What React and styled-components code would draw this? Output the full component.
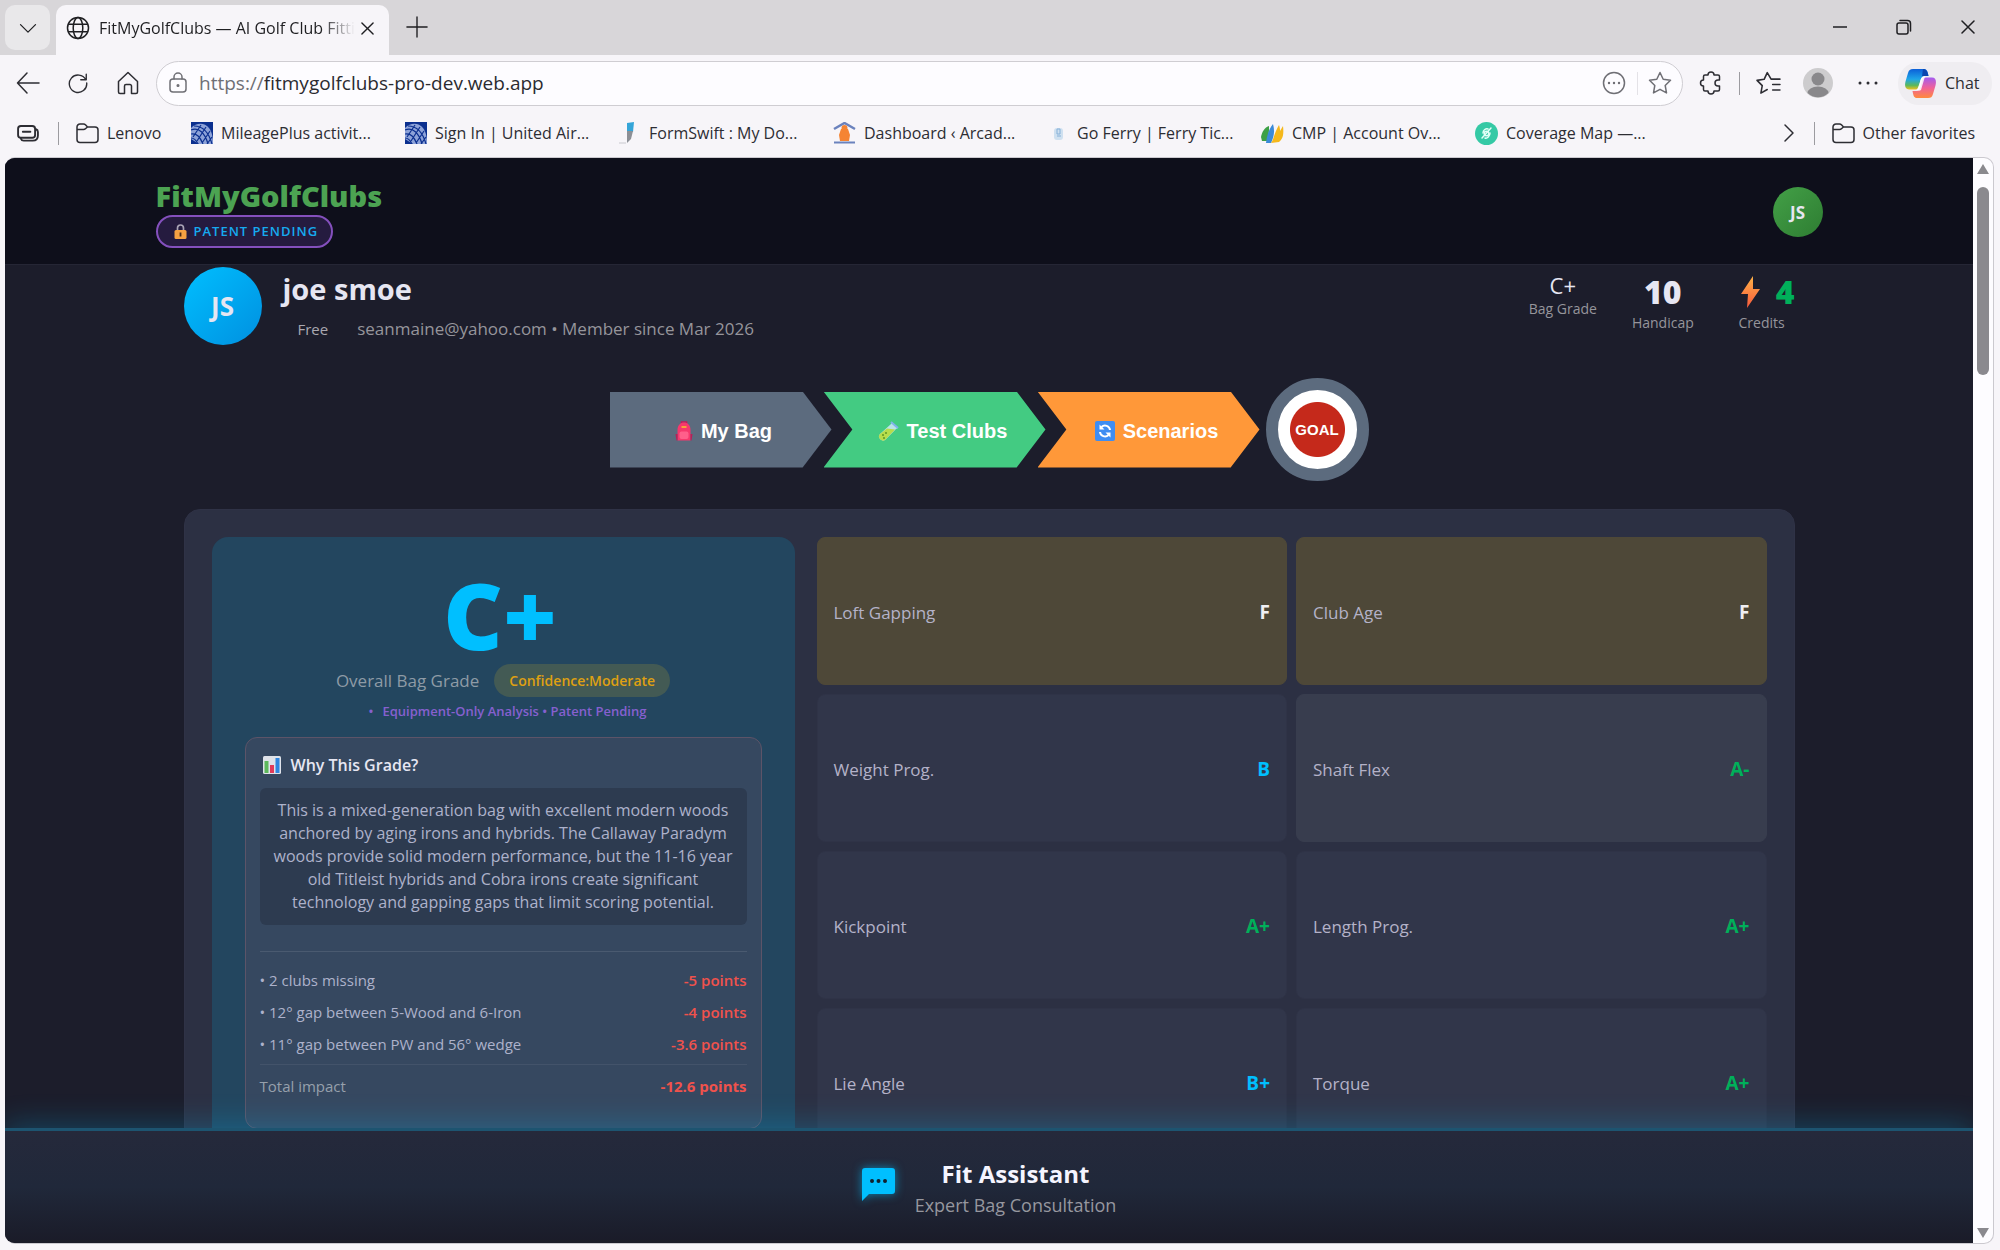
import React from "react";
import styled, {createGlobalStyle, css} from "styled-components";

const GlobalStyle = createGlobalStyle`
    * {
        box-sizing: border-box;
    }
    body {
        margin: 0;
        font-family: "Open Sans", "Noto Sans", sans-serif;
        color: #e6e6f2;
    }
    button {
        font: inherit;
        color: inherit;
        border: none;
        padding: 0;
        background: none;
        cursor: pointer;
    }
    a {
        color: inherit;
        text-decoration: none;
    }
    svg {
        display: block;
        flex: none;
    }
    h1, h2, h3, p, ul {
        margin: 0;
        padding: 0;
    }
`

/* ---------- browser window ---------- */

const StyledWindow = styled.div`
    display: flex;
    flex-direction: column;
    height: 100vh;
    overflow: hidden;
    background: #f7f5f9;
`
const StyledTabStrip = styled.div`
    display: flex;
    flex: none;
    height: 55px;
    padding-left: 5px;
    padding-top: 5px;
    background: #d8d6d9;
    color: #1f1f22;
`
const StyledTabMenu = styled.button`
    display: grid;
    place-items: center;
    width: 45px;
    height: 45px;
    margin-right: 6px;
    border-radius: 10px;
    background: #e9e8ea;
`
const StyledTab = styled.div`
    display: flex;
    align-items: center;
    gap: 9px;
    width: 333px;
    height: 50px;
    padding: 0 15px 4px 10px;
    border-radius: 10px 10px 0 0;
    background: #f7f5f9;
    font-size: 16px;
`
const StyledTabTitle = styled.span`
    flex: 1;
    overflow: hidden;
    white-space: nowrap;
    mask-image: linear-gradient(90deg, #000 222px, transparent 256px);
`
const StyledPlain = styled.button`
    display: grid;
    place-items: center;
    width: ${props => props.$w || 50}px;
    height: 44px;
`
const StyledTabClose = styled.button`
    margin-left: -4px;
`
const StyledWindowButtons = styled.div`
    display: flex;
    margin-left: auto;
`
const StyledToolbar = styled.div`
    display: flex;
    flex: none;
    align-items: center;
    height: 56px;
    padding: 0 8px 0 3px;
    color: #2d2d33;
`
const StyledAddress = styled.div`
    display: flex;
    flex: 1;
    align-items: center;
    height: 45px;
    margin: 0 3px;
    padding: 0 3px 0 12px;
    border: 1px solid #cfcdd2;
    border-radius: 23px;
    background: #fdfcff;
    font-size: 19px;
    color: #6f6f75;
`
const StyledScheme = styled.label`
    margin-left: 12px;
`
const StyledUrl = styled.input`
    flex: 1;
    border: none;
    padding: 0;
    outline: none;
    background: none;
    font: inherit;
    color: #2b2b30;
`
const StyledLine = styled.span`
    width: 1px;
    height: 23px;
    margin: 0 3px;
    background: ${props => props.$light ? "#e4e2e7" : "#9c9ba0"};
`
const StyledChat = styled.button`
    display: flex;
    align-items: center;
    gap: 9px;
    width: 94px;
    height: 43px;
    margin-left: 5px;
    padding-left: 7px;
    border-radius: 21px;
    background: #efedf1;
    font-size: 16px;
`
const StyledBookmarks = styled.nav`
    display: flex;
    flex: none;
    align-items: center;
    height: 46px;
    padding: 0 25px 2px 17px;
    font-size: 16px;
    color: #2d2d33;

    ${StyledLine} {
        margin: 0 17px 0 19px;
    }
`
const StyledBookmark = styled.a`
    display: flex;
    align-items: center;
    gap: 8px;
    width: ${props => props.$w ? props.$w + "px" : "auto"};
    white-space: nowrap;
`
const StyledMore = styled.button`
    margin-left: auto;
`
const StyledView = styled.div`
    display: flex;
    flex: 1;
    min-height: 0;
    margin: 0 6px 6px 5px;
    border: 1px solid #cbc9cf;
    border-left: none;
    border-radius: 10px;
    overflow: hidden;
    background: #fdfcff;
`
const StyledScroll = styled.div`
    display: flex;
    flex-direction: column;
    align-items: center;
    flex: none;
    width: 20px;
    padding: 6px 0 5px;
`
const StyledThumb = styled.div`
    width: 12px;
    height: 188px;
    margin: 13px 0 auto;
    border-radius: 6px;
    background: #8a898e;
`

/* ---------- page ---------- */

const StyledPage = styled.div`
    display: flex;
    flex: 1;
    flex-direction: column;
    min-width: 0;
    overflow: hidden;
    background: #1c1d2b;
`
const StyledHeader = styled.header`
    flex: none;
    border-bottom: 1px solid #252635;
    background: #0e0f1b;
`
const StyledHeaderInner = styled.div`
    display: flex;
    align-items: center;
    justify-content: space-between;
    max-width: 1667px;
    height: 106px;
    margin: 0 auto;
    padding-top: 2px;
`
const StyledLogo = styled.h1`
    font-size: 29px;
    font-weight: 800;
    line-height: 38px;
    color: #4ca352;
`
const StyledPatent = styled.div`
    display: flex;
    align-items: center;
    gap: 7px;
    width: max-content;
    height: 33px;
    padding: 0 13px 0 16px;
    border: 2px solid #8450bd;
    border-radius: 17px;
    background: #251b3f;
    font-size: 13px;
    font-weight: 600;
    letter-spacing: 1px;
    color: #16aaf0;
`
const StyledAvatar = styled.div`
    display: grid;
    flex: none;
    place-items: center;
    width: ${props => props.$size}px;
    height: ${props => props.$size}px;
    border-radius: 50%;
    background: ${props => props.$bg};
    font-size: ${props => props.$font}px;
    font-weight: 700;
`
const StyledMain = styled.main`
    flex: 1;
    min-height: 0;
    overflow: hidden;
`
const StyledContent = styled.div`
    max-width: 1611px;
    margin: 0 auto;
    padding-top: 2px;
`
const StyledProfile = styled.section`
    display: flex;
    align-items: center;
    gap: 21px;
    height: 78px;
`
const StyledName = styled.h2`
    font-size: 29px;
    line-height: 36px;
    margin-bottom: 10px;
`
const StyledMeta = styled.div`
    display: flex;
    align-items: baseline;
    gap: 14px;
    font-size: 17px;
    line-height: 24px;
    color: #96959b;
`
const StyledPlan = styled.span`
    padding: 0 15px;
    font-size: 15px;
    color: #a9a8b0;
`
const StyledStats = styled.div`
    display: flex;
    align-self: flex-start;
    gap: 35px;
    margin: 4px 0 0 auto;
`
const StyledStat = styled.div`
    display: flex;
    flex-direction: column;
    align-items: center;
    font-size: 14px;
    line-height: 20px;
    color: #96959b;
`
const StyledStatValue = styled.div`
    display: flex;
    align-items: center;
    height: ${props => props.$big ? 42 : 28}px;
    font-size: ${props => props.$big ? 32 : 22}px;
    font-weight: ${props => props.$big ? 800 : 400};
    color: ${props => props.$color || "#e6e6f2"};
`
const StyledSteps = styled.nav`
    display: flex;
    align-items: center;
    justify-content: center;
    margin: 33px 0 28px;
    font-family: "Liberation Sans", Arial, sans-serif;
    font-weight: 700;
    color: #fff;
`
const StyledStep = styled.button`
    display: flex;
    align-items: center;
    justify-content: center;
    gap: 8px;
    width: 222px;
    height: 76px;
    padding: 3px 0 0 6px;
    background: ${props => props.$color};
    font-size: 20px;
    clip-path: polygon(0 0, 87% 0, 100% 50%, 87% 100%, 0 100%);

    & + & {
        margin-left: -8px;
        padding-left: 16px;
        clip-path: polygon(0 0, 87% 0, 100% 50%, 87% 100%, 0 100%, 13% 50%);
    }
`
const StyledGoal = styled.button`
    width: 103px;
    height: 103px;
    margin-left: 6px;
    border: 12px solid #5c6b7e;
    border-radius: 50%;
    background: radial-gradient(circle, #c5291b 27px, #fff 28px);
    font-size: 15px;
`
const StyledPanel = styled.section`
    display: grid;
    grid-template-columns: 583fr 950fr;
    gap: 22px;
    padding: 27px;
    border: 1px solid #2f3246;
    border-radius: 16px;
    background: #2c3043;
`
const StyledGrade = styled.div`
    padding: 32px 33px;
    border-radius: 16px;
    background: #23465f;
    text-align: center;
`
const StyledLetter = styled.div`
    padding-right: 6px;
    font-size: 92px;
    font-weight: 800;
    line-height: 92px;
    color: #00bfff;
`
const StyledOverall = styled.div`
    display: flex;
    align-items: center;
    justify-content: center;
    gap: 15px;
    margin-top: 3px;
    font-size: 17px;
    color: #8e9ba6;
`
const StyledConfidence = styled.span`
    padding: 0 15px;
    border-radius: 17px;
    background: #435a54;
    font-size: 14px;
    font-weight: 600;
    line-height: 33px;
    color: #dfa012;
`
const StyledEquipment = styled.p`
    padding-left: 9px;
    font-size: 13px;
    font-weight: 600;
    line-height: 28px;
    margin-bottom: 12px;
    color: #8660cf;

    span {
        margin-right: 9px;
    }
`
const StyledWhy = styled.div`
    height: 392px;
    padding: 14px;
    border: 1px solid #5c5468;
    border-radius: 12px;
    background: #364860;
    font-size: 15px;
    text-align: left;
`
const StyledWhyTitle = styled.h3`
    display: flex;
    align-items: center;
    gap: 10px;
    margin-bottom: 10px;
    padding-left: 3px;
    font-size: 16px;
    font-weight: 600;
    line-height: 26px;
`
const StyledSummary = styled.p`
    padding: 11px 12px;
    border-radius: 6px;
    background: #2d3b50;
    font-size: 16px;
    line-height: 23px;
    text-align: center;
    color: #adb2cb;
`
const StyledDeductions = styled.ul`
    margin-top: 26px;
    padding: 12px 0 0;
    border-top: 1px solid #4a5a70;
    list-style: none;
    color: #adb2cb;
`
const rowBetween = css`
    display: flex;
    align-items: center;
    justify-content: space-between;
`
const StyledDeduction = styled.li`
    ${rowBetween}
    height: 32px;
`
const StyledTotal = styled.div`
    ${rowBetween}
    height: 42px;
    margin-top: 4px;
    border-top: 1px solid #43536a;
    color: #96a0ac;
`
const StyledPoints = styled.span`
    font-weight: ${props => props.$total ? 700 : 600};
    color: #f0524c;
`
const StyledTiles = styled.div`
    display: grid;
    grid-template-columns: 1fr 1fr;
    grid-auto-rows: 148px;
    gap: 9px;
`
const tileColors = {
    warn: "#4e4838",
    hover: "#383d4e",
    plain: "#31364a",
}
const StyledTile = styled.div`
    ${rowBetween}
    padding: 2px 16px 0;
    border: 1px solid ${props => props.$kind === "plain" ? "#2f3347" : tileColors[props.$kind]};
    border-radius: 8px;
    background: ${props => tileColors[props.$kind]};
    font-size: 17px;
    color: #b4b2c8;
`
const StyledMark = styled.span`
    font-size: 19px;
    font-weight: 700;
    color: ${props => props.$color};
`
const StyledAssistant = styled.button`
    position: relative;
    display: flex;
    flex: none;
    align-items: center;
    justify-content: center;
    gap: 20px;
    height: 115px;
    padding-top: 2px;
    border-top: 3px solid #1d5470;
    background: linear-gradient(#25293b, #20283a 50%, #1a1b28);
    box-shadow: 0 -4px 28px rgba(0, 191, 255, 0.24);

    svg {
        margin-bottom: 8px;
        filter: drop-shadow(0 0 5px rgba(0, 191, 255, 0.6));
    }
`
const StyledAssistantTitle = styled.div`
    font-size: 24px;
    font-weight: 700;
    line-height: 34px;
    color: #f5f5ff;
`
const StyledAssistantSub = styled.div`
    font-size: 18px;
    line-height: 28px;
    color: #96979f;
`

/* ---------- icons ---------- */

const Icon = ({w = 24, h, box = "0 0 24 24", sw = 1.5, children}) => (
    <svg width={w} height={h || w} viewBox={box} fill="none" stroke="currentColor" strokeWidth={sw}
         strokeLinecap="round" strokeLinejoin="round" aria-hidden="true">{children}</svg>
)
const ChevronDown = () => <Icon w={20}><path d="M3 8l9 9 9-9"/></Icon>
const Globe = () => (
    <Icon w={24}>
        <circle cx="12" cy="12" r="10.5"/>
        <ellipse cx="12" cy="12" rx="4.8" ry="10.5"/>
        <path d="M2.5 8.3h19M2.5 15.7h19"/>
    </Icon>
)
const Close = ({w = 14}) => <Icon w={w} box="0 0 14 14"><path d="M1 1l12 12M13 1L1 13"/></Icon>
const Plus = () => <Icon w={22}><path d="M12 1v22M1 12h22"/></Icon>
const Minus = () => <Icon w={14} box="0 0 14 14"><path d="M0 7h14"/></Icon>
const Restore = () => (
    <Icon w={16} box="0 0 16 16">
        <rect x="1" y="4" width="11" height="11" rx="2"/>
        <path d="M4 1.5h7.5a3 3 0 0 1 3 3V12"/>
    </Icon>
)
const Back = () => <Icon w={24}><path d="M23 12H1.500M11 2L1.500 12l9.500 10"/></Icon>
const Reload = () => <Icon w={22}><path d="M20.500 8.500A9.500 9.500 0 1 0 21.500 12M21 2.500v6h-6"/></Icon>
const Home = () => <Icon w={24}><path d="M2.500 10.500L12 1.500l9.500 9V21a1.500 1.500 0 0 1-1.500 1.500h-4.500V15a1.500 1.500 0 0 0-1.500-1.500h-4A1.500 1.500 0 0 0 8.500 15v7.500H4A1.500 1.500 0 0 1 2.500 21z"/></Icon>
const UrlLock = () => (
    <Icon w={18} h={22} box="0 0 18 22">
        <rect x="1" y="7" width="16" height="13" rx="3"/>
        <path d="M5 7V5a4 4 0 0 1 8 0v2"/>
        <circle cx="9" cy="13.500" r="0.800" fill="currentColor"/>
    </Icon>
)
const DotsCircle = () => (
    <Icon w={24}>
        <circle cx="12" cy="12" r="10.500"/>
        <path d="M7 12h.01M12 12h.01M17 12h.01" strokeWidth="2.400"/>
    </Icon>
)
const Star = () => <Icon w={24}><path d="M12 1.500l3.200 6.800 7.300 1-5.300 5.200 1.300 7.400L12 18.300l-6.500 3.600 1.300-7.400L1.500 9.300l7.300-1z"/></Icon>
const Puzzle = () => <Icon w={24}><path d="M9 4a3 3 0 0 1 6 0h4a1.500 1.500 0 0 1 1.500 1.500V9h-1.500a3 3 0 0 0 0 6h1.500v3.500A1.500 1.500 0 0 1 19 20h-4a3 3 0 0 1-6 0H6a1.500 1.500 0 0 1-1.500-1.500V15a3 3 0 0 1 0-6V5.500A1.500 1.500 0 0 1 6 4z"/></Icon>
const Favorites = () => <Icon w={25}><path d="M14.500 7.800h8.500M16 13h7M16 18.200h7M14.500 7.800L10.800 1.500 7.800 8l-6.800 1 5 5-1.300 7.200 6.100-3.400"/></Icon>
const Dots = () => <Icon w={24}><path d="M4 12h.01M12 12h.01M20 12h.01" strokeWidth="3"/></Icon>
const Person = () => (
    <svg width="30" height="30" viewBox="0 0 30 30" aria-hidden="true">
        <circle cx="15" cy="15" r="15" fill="#cdccce"/>
        <circle cx="15" cy="11" r="6.500" fill="#89888b"/>
        <path d="M4.500 25a10.500 6.500 0 0 1 21 0 15 15 0 0 1-21 0z" fill="#89888b"/>
    </svg>
)
const Copilot = () => (
    <svg width="31" height="29" viewBox="0 0 31 29" aria-hidden="true">
        <defs>
            <linearGradient id="cpA" x1="0" y1="0" x2="0" y2="1">
                <stop offset="0" stopColor="#0b5fd8"/>
                <stop offset=".5" stopColor="#1fa6e8"/>
                <stop offset=".8" stopColor="#5cb85a"/>
                <stop offset="1" stopColor="#f0c21b"/>
            </linearGradient>
            <linearGradient id="cpB" x1="0" y1="0" x2="0" y2="1">
                <stop offset="0" stopColor="#a45cf0"/>
                <stop offset=".5" stopColor="#f0629a"/>
                <stop offset="1" stopColor="#ff8a3c"/>
            </linearGradient>
        </defs>
        <path d="M8 0h11c3 0 3.500 2 4.500 7H20c-3 0-4 2-5 6l-1 4c-1 3-2 3.500-5 3.500H4c-4 0-4.500-4-3.500-8L3 4c1-3 2-4 5-4z" fill="url(#cpA)"/>
        <path d="M18 0c3 0 4.500 2 5.500 7H17z" fill="#0b47b0"/>
        <path d="M23 29H12c-3 0-3.500-2-4.500-7H11c3 0 4-2 5-6l1-4c1-3 2-3.500 5-3.500h5c4 0 4.500 4 3.500 8L28 25c-1 3-2 4-5 4z" fill="url(#cpB)"/>
        <path d="M15 13c1-4 2-5.500 5-5.500L16 21c-1 1-3 1-4 0z" fill="#fff" opacity=".85"/>
    </svg>
)
const Workspaces = () => (
    <Icon w={22} h={17} box="0 0 23 18" sw={2}>
        <path d="M20 4.500c1.500.5 2 1.500 2 3V11c0 3.500-2 5.500-5.500 5.500H7c-1.500 0-2.500-.5-3-2"/>
        <rect x="1" y="1" width="18" height="12.500" rx="3"/>
        <path d="M6 7.200h8"/>
    </Icon>
)
const Folder = () => (
    <Icon w={23} h={21} box="0 0 23 21">
        <path d="M1 6V4a3 3 0 0 1 3-3h3.500c1 0 1.500.3 2.200 1L11.500 4H19a3 3 0 0 1 3 3v9.500a3 3 0 0 1-3 3H4a3 3 0 0 1-3-3zM1 6.500h6.500c1 0 1.500-.3 2.200-1L11.500 4"/>
    </Icon>
)
const ChevronRight = () => <Icon w={12} h={20} box="0 0 12 20"><path d="M2 2l8 8-8 8"/></Icon>
const United = () => (
    <svg width="22" height="22" viewBox="0 0 22 22" aria-hidden="true">
        <rect width="22" height="22" fill="#0b2f8f"/>
        <path d="M0 6C6 0 14 1 18 6c3 4 4 9 4 16H8L0 17z" fill="#8da2d8"/>
        <path d="M0 8c8-3 14 3 17 14M0 12c6-1 9 3 12 10M3 4c9 0 15 7 18 18M0 16c3 0 5 2 7 6M2 15L10 3M6 19l9-14M11 21l8-12M16 22l5-7"
              stroke="#0b2f8f" strokeWidth="1.200" fill="none"/>
    </svg>
)
const Pen = () => (
    <svg width="22" height="22" viewBox="0 0 22 22" aria-hidden="true">
        <path d="M8 1l7-1-1 10H8z" fill="#35a5d8"/>
        <path d="M8 9h6l-2 8-4 4z" fill="#8c8f96"/>
        <path d="M0 21h7" stroke="#c9c9cf"/>
    </svg>
)
const Arcade = () => (
    <svg width="23" height="22" viewBox="0 0 23 22" aria-hidden="true">
        <path d="M1 7l10.500-6L22 7" stroke="#6b82bd" strokeWidth="2.500" fill="none"/>
        <path d="M1 20.500h21" stroke="#6b82bd" strokeWidth="2"/>
        <path d="M8 7h7l2 6-1 6H7l-1-6z" fill="#f58433"/>
        <circle cx="11.500" cy="6" r="3" fill="#f58433"/>
    </svg>
)
const Ferry = () => (
    <svg width="22" height="22" viewBox="0 0 22 22" aria-hidden="true">
        <rect x="7" y="6" width="9" height="12" rx="3" fill="#cfe0f0"/>
        <path d="M10 7h3v5h-3zM10 14h4" stroke="#86b0d8" fill="none"/>
    </svg>
)
const Cmp = () => (
    <svg width="23" height="21" viewBox="0 0 23 21" aria-hidden="true">
        <path d="M0 14C1 9 3 5 8 3c0 6 0 10-2 15H1z" fill="#3da046"/>
        <path d="M5 20C6 12 8 6 12 1c2 7 1 13-2 19z" fill="#3b8ad8"/>
        <path d="M10 20c3-4 3-10 8-18 1 3 1 4 1 6l3-5c1 8 0 13-4 16z" fill="#f5b81c"/>
    </svg>
)
const Coverage = () => (
    <svg width="23" height="23" viewBox="0 0 23 23" aria-hidden="true">
        <circle cx="11.500" cy="11.500" r="11.500" fill="#35c9a5"/>
        <g fill="none" stroke="#e4fff7" strokeWidth="1.500" strokeLinecap="round">
            <path d="M7 16l9-10M8 11c0-3 3-5 5-4M15 11c0 3-3 6-5 5"/>
            <circle cx="11.500" cy="11.500" r="2.300"/>
        </g>
    </svg>
)
const GoldLock = () => (
    <svg width="13" height="15" viewBox="0 0 13 15" aria-hidden="true">
        <path d="M3.500 7V4a3 3 0 0 1 6 0v3" stroke="#a9a3b5" strokeWidth="1.700" fill="none"/>
        <rect x=".5" y="6" width="12" height="9" rx="1.500" fill="#f5a142"/>
        <path d="M6.500 8.500v4" stroke="#4a2c18" strokeWidth="1.800"/>
    </svg>
)
const Backpack = () => (
    <svg width="18" height="20" viewBox="0 0 18 20" aria-hidden="true">
        <path d="M6.500 3V1h5v2" stroke="#c2185b" strokeWidth="1.500" fill="none"/>
        <path d="M2.500 9c0-5 3-7.500 6.500-7.500S15.500 4 15.500 9v10.500h-13z" fill="#f6386d"/>
        <path d="M.5 13h2v6.500h-1zM15.500 13h2l-1 6.500h-1z" fill="#b81f58"/>
        <rect x="4.500" y="10.500" width="9" height="7.500" rx="2" fill="#ff5f8b"/>
        <path d="M6.500 6h5" stroke="#f7a23b" strokeWidth="2"/>
    </svg>
)
const TestTube = () => (
    <svg width="21" height="20" viewBox="0 0 21 20" aria-hidden="true">
        <path d="M14 1l6 6-2 1-10 10a3.500 3.500 0 0 1-6-5L13 3z" fill="#b9e3e8"/>
        <path d="M9 7.500l8 1L8 18a3.500 3.500 0 0 1-6-5z" fill="#b7dd4b"/>
        <path d="M13 1l7 6" stroke="#7fb2ea" strokeWidth="2"/>
        <path d="M5 14h.01M8 12h.01M6 17h.01" stroke="#5f9626" strokeWidth="2" strokeLinecap="round"/>
    </svg>
)
const Cycle = () => (
    <svg width="20" height="20" viewBox="0 0 20 20" aria-hidden="true">
        <rect width="20" height="20" rx="2" fill="#3f8df2"/>
        <path d="M15 9a5 5 0 0 0-8.500-3M5 11a5 5 0 0 0 8.500 3" stroke="#fff" strokeWidth="2" fill="none"/>
        <path d="M4.500 3.500v5h5zM15.500 16.500v-5h-5z" fill="#fff"/>
    </svg>
)
const Chart = () => (
    <svg width="18" height="18" viewBox="0 0 18 18" aria-hidden="true">
        <rect width="18" height="18" rx="1.500" fill="#dfe3ea"/>
        <rect x="1.500" y="5" width="4" height="12" fill="#5cb85c"/>
        <rect x="7" y="9" width="4" height="8" fill="#e23b5a"/>
        <rect x="12.500" y="2" width="4" height="15" fill="#2f86e0"/>
    </svg>
)
const Bolt = () => (
    <svg width="47" height="34" viewBox="0 0 47 34" aria-hidden="true">
        <defs>
            <linearGradient id="bolt" x1="0" y1="0" x2="0" y2="1">
                <stop offset="0" stopColor="#ffb347"/>
                <stop offset="1" stopColor="#f8593c"/>
            </linearGradient>
        </defs>
        <path d="M24 1L12 19h7l-1 14 13-19h-7z" fill="url(#bolt)"/>
    </svg>
)
const ChatBubble = () => (
    <svg width="33" height="33" viewBox="0 0 33 33" aria-hidden="true">
        <path d="M3 0h27a3 3 0 0 1 3 3v20a3 3 0 0 1-3 3H7l-7 7V3a3 3 0 0 1 3-3z" fill="#00bfff"/>
        <path d="M10 13h.01M16.500 13h.01M23 13h.01" stroke="#10202e" strokeWidth="4" strokeLinecap="round"/>
    </svg>
)
const ScrollArrow = ({down}) => (
    <svg width="12" height="10" viewBox="0 0 12 10" aria-hidden="true">
        <path d={down ? "M0 0h12L6 10z" : "M0 10h12L6 0z"} fill="#8a898e"/>
    </svg>
)

/* ---------- data ---------- */

const bookmarks = [
    {icon: <United/>, label: "MileagePlus activit..."},
    {icon: <United/>, label: "Sign In | United Air..."},
    {icon: <Pen/>, label: "FormSwift : My Do..."},
    {icon: <Arcade/>, label: "Dashboard ‹ Arcad..."},
    {icon: <Ferry/>, label: "Go Ferry | Ferry Tic..."},
    {icon: <Cmp/>, label: "CMP | Account Ov..."},
    {icon: <Coverage/>, label: "Coverage Map —..."},
]

const deductions = [
    {label: "2 clubs missing", points: "-5 points"},
    {label: "12° gap between 5-Wood and 6-Iron", points: "-4 points"},
    {label: "11° gap between PW and 56° wedge", points: "-3.6 points"},
]

const tiles = [
    {label: "Loft Gapping", mark: "F", kind: "warn"},
    {label: "Club Age", mark: "F", kind: "warn"},
    {label: "Weight Prog.", mark: "B", kind: "plain"},
    {label: "Shaft Flex", mark: "A-", kind: "hover"},
    {label: "Kickpoint", mark: "A+", kind: "plain"},
    {label: "Length Prog.", mark: "A+", kind: "plain"},
    {label: "Lie Angle", mark: "B+", kind: "plain"},
    {label: "Torque", mark: "A+", kind: "plain"},
]

const markColors = {A: "#00b05a", B: "#00bfff", F: "#f0eff2"}

const BrowserChrome = () => {
    const [url, setUrl] = React.useState("fitmygolfclubs-pro-dev.web.app");

    return (
        <>
            <StyledTabStrip>
                <StyledTabMenu aria-label="Tab menu"><ChevronDown/></StyledTabMenu>
                <StyledTab>
                    <Globe/>
                    <StyledTabTitle>FitMyGolfClubs — AI Golf Club Fitting</StyledTabTitle>
                    <StyledTabClose aria-label="Close tab"><Close w={13}/></StyledTabClose>
                </StyledTab>
                <StyledPlain $w={56} aria-label="New tab"><Plus/></StyledPlain>
                <StyledWindowButtons>
                    <StyledPlain $w={64} aria-label="Minimize"><Minus/></StyledPlain>
                    <StyledPlain $w={64} aria-label="Restore"><Restore/></StyledPlain>
                    <StyledPlain $w={64} aria-label="Close"><Close/></StyledPlain>
                </StyledWindowButtons>
            </StyledTabStrip>
            <StyledToolbar>
                <StyledPlain aria-label="Back"><Back/></StyledPlain>
                <StyledPlain aria-label="Reload"><Reload/></StyledPlain>
                <StyledPlain aria-label="Home"><Home/></StyledPlain>
                <StyledAddress>
                    <UrlLock/>
                    <StyledScheme htmlFor="url">https://</StyledScheme>
                    <StyledUrl id="url" value={url} onChange={e => setUrl(e.target.value)}/>
                    <StyledPlain $w={40} aria-label="Page options"><DotsCircle/></StyledPlain>
                    <StyledLine $light/>
                    <StyledPlain $w={38} aria-label="Add favorite"><Star/></StyledPlain>
                </StyledAddress>
                <StyledPlain aria-label="Extensions"><Puzzle/></StyledPlain>
                <StyledLine/>
                <StyledPlain aria-label="Favorites"><Favorites/></StyledPlain>
                <StyledPlain aria-label="Profile"><Person/></StyledPlain>
                <StyledPlain aria-label="More"><Dots/></StyledPlain>
                <StyledChat><Copilot/>Chat</StyledChat>
            </StyledToolbar>
            <StyledBookmarks>
                <Workspaces/>
                <StyledLine/>
                <StyledBookmark href="#" $w={115}><Folder/>Lenovo</StyledBookmark>
                {bookmarks.map(b => (
                    <StyledBookmark href="#" $w={214} key={b.label}>{b.icon}{b.label}</StyledBookmark>
                ))}
                <StyledMore aria-label="More bookmarks"><ChevronRight/></StyledMore>
                <StyledLine/>
                <StyledBookmark href="#"><Folder/>Other favorites</StyledBookmark>
            </StyledBookmarks>
        </>
    );
}

const Profile = () => (
    <StyledProfile>
        <StyledAvatar $size={78} $font={26} $bg="linear-gradient(135deg, #00bfff, #0090e0)">JS</StyledAvatar>
        <div>
            <StyledName>joe smoe</StyledName>
            <StyledMeta>
                <StyledPlan>Free</StyledPlan>
                <span>seanmaine@yahoo.com • Member since Mar 2026</span>
            </StyledMeta>
        </div>
        <StyledStats>
            <StyledStat>
                <StyledStatValue>C+</StyledStatValue>
                Bag Grade
            </StyledStat>
            <StyledStat>
                <StyledStatValue $big>10</StyledStatValue>
                Handicap
            </StyledStat>
            <StyledStat>
                <StyledStatValue $big $color="#00b05a"><Bolt/>4</StyledStatValue>
                Credits
            </StyledStat>
        </StyledStats>
    </StyledProfile>
)

const GradeCard = () => (
    <StyledGrade>
        <StyledLetter>C+</StyledLetter>
        <StyledOverall>
            Overall Bag Grade
            <StyledConfidence>Confidence:Moderate</StyledConfidence>
        </StyledOverall>
        <StyledEquipment><span>•</span>Equipment-Only Analysis • Patent Pending</StyledEquipment>
        <StyledWhy>
            <StyledWhyTitle><Chart/>Why This Grade?</StyledWhyTitle>
            <StyledSummary>
                This is a mixed-generation bag with excellent modern woods anchored by aging irons
                and hybrids. The Callaway Paradym woods provide solid modern performance, but
                the 11-16 year old Titleist hybrids and Cobra irons create significant technology
                and gapping gaps that limit scoring potential.
            </StyledSummary>
            <StyledDeductions>
                {deductions.map(d => (
                    <StyledDeduction key={d.label}>
                        <span>• {d.label}</span>
                        <StyledPoints>{d.points}</StyledPoints>
                    </StyledDeduction>
                ))}
            </StyledDeductions>
            <StyledTotal>
                <span>Total impact</span>
                <StyledPoints $total>-12.6 points</StyledPoints>
            </StyledTotal>
        </StyledWhy>
    </StyledGrade>
)

const App = () => {
    return (
        <StyledWindow>
            <GlobalStyle/>
            <BrowserChrome/>
            <StyledView>
                <StyledPage>
                    <StyledHeader>
                        <StyledHeaderInner>
                            <div>
                                <StyledLogo>FitMyGolfClubs</StyledLogo>
                                <StyledPatent><GoldLock/>PATENT PENDING</StyledPatent>
                            </div>
                            <StyledAvatar $size={50} $font={17} $bg="linear-gradient(135deg, #43a047, #2e7d32)">JS</StyledAvatar>
                        </StyledHeaderInner>
                    </StyledHeader>
                    <StyledMain>
                        <StyledContent>
                            <Profile/>
                            <StyledSteps>
                                <StyledStep $color="#5c6b7e"><Backpack/>My Bag</StyledStep>
                                <StyledStep $color="#43cb82"><TestTube/>Test Clubs</StyledStep>
                                <StyledStep $color="#ff9839"><Cycle/>Scenarios</StyledStep>
                                <StyledGoal>GOAL</StyledGoal>
                            </StyledSteps>
                            <StyledPanel>
                                <GradeCard/>
                                <StyledTiles>
                                    {tiles.map(t => (
                                        <StyledTile key={t.label} $kind={t.kind}>
                                            {t.label}
                                            <StyledMark $color={markColors[t.mark[0]]}>{t.mark}</StyledMark>
                                        </StyledTile>
                                    ))}
                                </StyledTiles>
                            </StyledPanel>
                        </StyledContent>
                    </StyledMain>
                    <StyledAssistant>
                        <ChatBubble/>
                        <div>
                            <StyledAssistantTitle>Fit Assistant</StyledAssistantTitle>
                            <StyledAssistantSub>Expert Bag Consultation</StyledAssistantSub>
                        </div>
                    </StyledAssistant>
                </StyledPage>
                <StyledScroll>
                    <ScrollArrow/>
                    <StyledThumb/>
                    <ScrollArrow down/>
                </StyledScroll>
            </StyledView>
        </StyledWindow>
    );
}

export default App;
